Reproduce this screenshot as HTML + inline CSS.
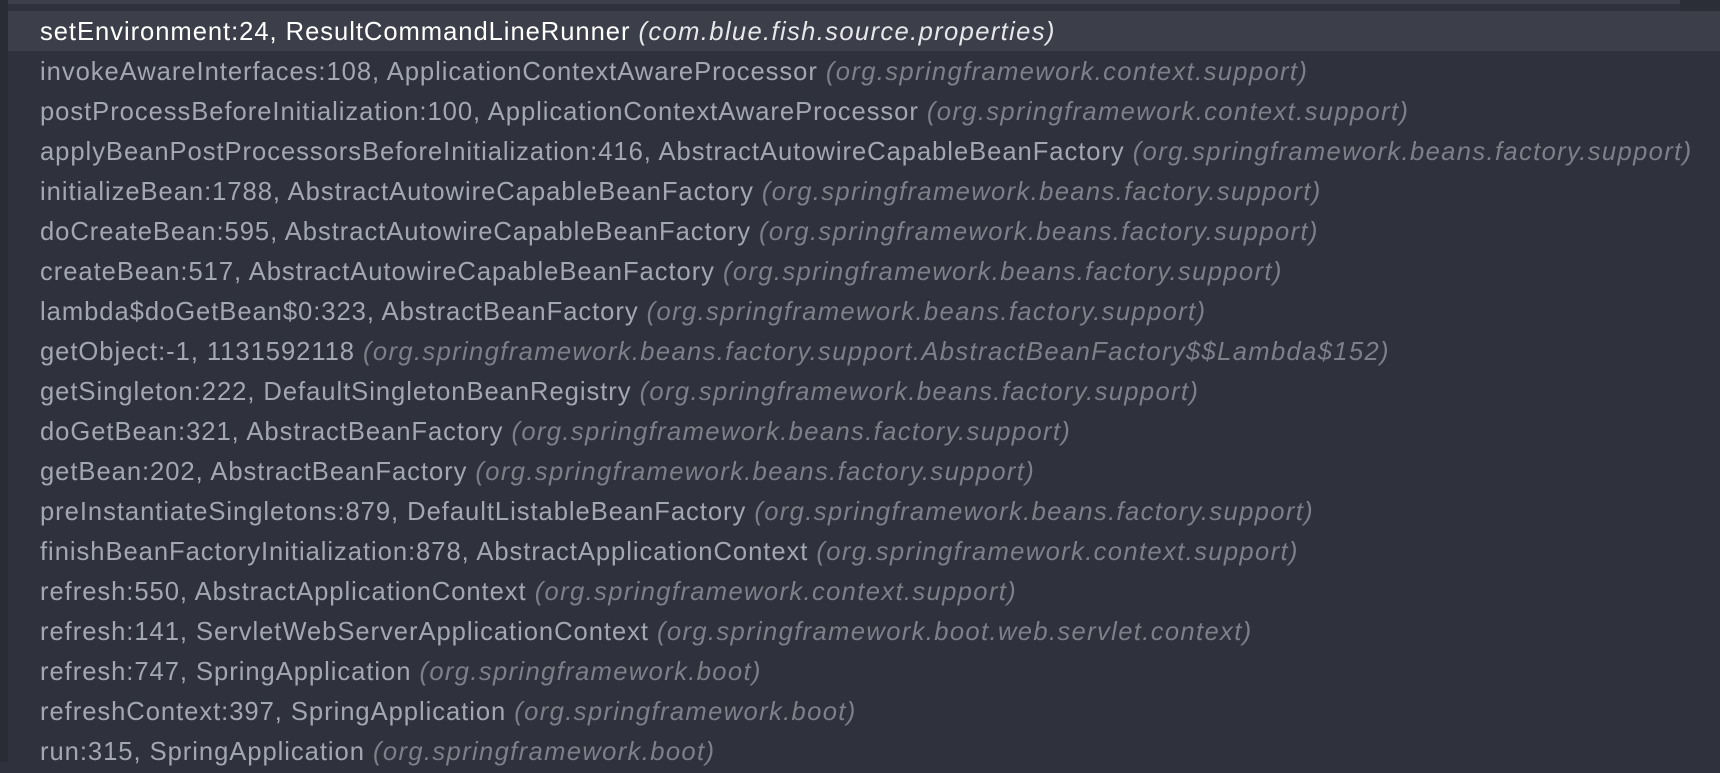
<!DOCTYPE html>
<html><head><meta charset="utf-8"><style>
html,body{margin:0;padding:0;width:1720px;height:762px;overflow:hidden;background:#2f323c;font-family:"Liberation Sans",sans-serif}
.top{position:absolute;left:0;top:0;width:1680px;height:4px;background:#3d404b}
.topr{position:absolute;left:1680px;top:0;width:40px;height:11px;background:#2b2e36}
.left{position:absolute;left:0;top:0;width:8px;height:762px;background:#292c34}
.sel{position:absolute;left:8px;top:11px;width:1712px;height:40px;background:#3c3f4a}
.row{position:absolute;left:40px;height:40px;line-height:42px;font-size:25.6px;color:#a3a7b1;white-space:nowrap;letter-spacing:0.95px}
.row i{color:#7d8089;letter-spacing:1.35px}
.row.s{color:#ffffff}
.row.s i{color:#e6e7ea}
</style></head><body>
<div class="top"></div><div class="topr"></div><div class="left"></div><div class="sel"></div>
<div class="row s" style="top:11px">setEnvironment:24, ResultCommandLineRunner <i>(com.blue.fish.source.properties)</i></div>
<div class="row" style="top:51px">invokeAwareInterfaces:108, ApplicationContextAwareProcessor <i>(org.springframework.context.support)</i></div>
<div class="row" style="top:91px">postProcessBeforeInitialization:100, ApplicationContextAwareProcessor <i>(org.springframework.context.support)</i></div>
<div class="row" style="top:131px">applyBeanPostProcessorsBeforeInitialization:416, AbstractAutowireCapableBeanFactory <i>(org.springframework.beans.factory.support)</i></div>
<div class="row" style="top:171px">initializeBean:1788, AbstractAutowireCapableBeanFactory <i>(org.springframework.beans.factory.support)</i></div>
<div class="row" style="top:211px">doCreateBean:595, AbstractAutowireCapableBeanFactory <i>(org.springframework.beans.factory.support)</i></div>
<div class="row" style="top:251px">createBean:517, AbstractAutowireCapableBeanFactory <i>(org.springframework.beans.factory.support)</i></div>
<div class="row" style="top:291px">lambda$doGetBean$0:323, AbstractBeanFactory <i>(org.springframework.beans.factory.support)</i></div>
<div class="row" style="top:331px">getObject:-1, 1131592118 <i>(org.springframework.beans.factory.support.AbstractBeanFactory$$Lambda$152)</i></div>
<div class="row" style="top:371px">getSingleton:222, DefaultSingletonBeanRegistry <i>(org.springframework.beans.factory.support)</i></div>
<div class="row" style="top:411px">doGetBean:321, AbstractBeanFactory <i>(org.springframework.beans.factory.support)</i></div>
<div class="row" style="top:451px">getBean:202, AbstractBeanFactory <i>(org.springframework.beans.factory.support)</i></div>
<div class="row" style="top:491px">preInstantiateSingletons:879, DefaultListableBeanFactory <i>(org.springframework.beans.factory.support)</i></div>
<div class="row" style="top:531px">finishBeanFactoryInitialization:878, AbstractApplicationContext <i>(org.springframework.context.support)</i></div>
<div class="row" style="top:571px">refresh:550, AbstractApplicationContext <i>(org.springframework.context.support)</i></div>
<div class="row" style="top:611px">refresh:141, ServletWebServerApplicationContext <i>(org.springframework.boot.web.servlet.context)</i></div>
<div class="row" style="top:651px">refresh:747, SpringApplication <i>(org.springframework.boot)</i></div>
<div class="row" style="top:691px">refreshContext:397, SpringApplication <i>(org.springframework.boot)</i></div>
<div class="row" style="top:731px">run:315, SpringApplication <i>(org.springframework.boot)</i></div>
</body></html>
